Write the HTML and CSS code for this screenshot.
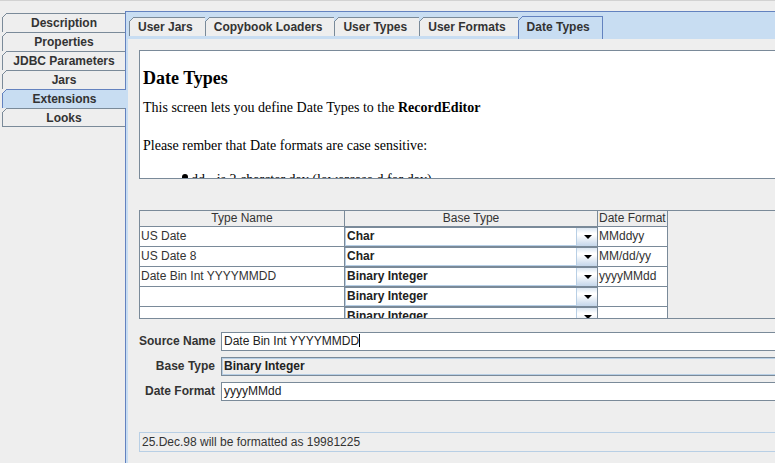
FILE: index.html
```html
<!DOCTYPE html>
<html>
<head>
<meta charset="utf-8">
<title>Date Types</title>
<link rel="stylesheet" href="styles.css">
</head>
<body>
<div class="app">
  <div class="side">
    <div class="vtab">Description</div>
    <div class="vtab">Properties</div>
    <div class="vtab">JDBC Parameters</div>
    <div class="vtab">Jars</div>
    <div class="vtab sel">Extensions</div>
    <div class="vtab last">Looks</div>
  </div>
  <div class="main">
    <div class="tabstrip">
      <div class="htab">User Jars</div>
      <div class="htab">Copybook Loaders</div>
      <div class="htab">User Types</div>
      <div class="htab">User Formats</div>
      <div class="htab sel">Date Types</div>
    </div>
    <div class="content">
      <div class="doc">
        <h2>Date Types</h2>
        <p class="p1">This screen lets you define Date Types to the <b>RecordEditor</b></p>
        <p class="p2">Please rember that Date formats are case sensitive:</p>
        <ul>
          <li>dd - is 2 charcter day (lowercase d for day)</li>
        </ul>
      </div>
      <div class="tpane">
        <div class="grid">
          <div class="th">Type Name</div>
          <div class="th">Base Type</div>
          <div class="th left">Date Format</div>

          <div class="td">US Date</div>
          <div class="td cbcell"><div class="cb"><div class="cb-text">Char</div><div class="cb-btn"><span class="arrow"></span></div></div></div>
          <div class="td">MMddyy</div>

          <div class="td">US Date 8</div>
          <div class="td cbcell"><div class="cb"><div class="cb-text">Char</div><div class="cb-btn"><span class="arrow"></span></div></div></div>
          <div class="td">MM/dd/yy</div>

          <div class="td">Date Bin Int YYYYMMDD</div>
          <div class="td cbcell"><div class="cb"><div class="cb-text">Binary Integer</div><div class="cb-btn"><span class="arrow"></span></div></div></div>
          <div class="td">yyyyMMdd</div>

          <div class="td"></div>
          <div class="td cbcell"><div class="cb"><div class="cb-text">Binary Integer</div><div class="cb-btn"><span class="arrow"></span></div></div></div>
          <div class="td"></div>

          <div class="td"></div>
          <div class="td cbcell"><div class="cb"><div class="cb-text">Binary Integer</div><div class="cb-btn"><span class="arrow"></span></div></div></div>
          <div class="td"></div>
        </div>
      </div>
      <div class="form">
        <div class="lbl">Source Name</div>
        <div class="fld">Date Bin Int YYYYMMDD<span class="caret"></span></div>
        <div class="lbl">Base Type</div>
        <div class="fld combo">Binary Integer</div>
        <div class="lbl">Date Format</div>
        <div class="fld">yyyyMMdd</div>
      </div>
      <div class="msg">25.Dec.98 will be formatted as 19981225</div>
    </div>
  </div>
</div>
</body>
</html>
```

FILE: styles.css
```css
* { box-sizing: border-box; }
html, body { margin: 0; padding: 0; }
body {
  width: 775px;
  height: 463px;
  overflow: hidden;
  background: #eeeeee;
  font-family: "Liberation Sans", Arial, sans-serif;
  font-size: 12px;
  color: #333333;
}
.app {
  display: flex;
  height: 463px;
  border-top: 1px solid #d2d2d2;
}

/* left tabs */
.side {
  width: 125px;
  flex: none;
  padding: 12px 0 0 2px;
  display: flex;
  flex-direction: column;
}
.vtab {
  position: relative;
  height: 19px;
  border-top: 1px solid #7a8a99;
  border-left: 1px solid #7a8a99;
  background: #eeeeee;
  font-weight: bold;
  display: flex;
  align-items: center;
  justify-content: center;
  white-space: nowrap;
}
.vtab::before {
  content: "";
  position: absolute;
  top: -1px;
  left: -1px;
  width: 6px;
  height: 6px;
  background: linear-gradient(135deg, #eeeeee 0 3px, #7a8a99 3px 4.2px, transparent 4.2px);
}
.vtab.last { border-bottom: 1px solid #7a8a99; }
.vtab.sel {
  background: #c8ddf2;
  border-color: #6382bf;
  margin-right: -1px;
  z-index: 1;
}
.vtab.sel::before {
  background: linear-gradient(135deg, #eeeeee 0 3px, #6382bf 3px 4.2px, transparent 4.2px);
}

/* main tabbed pane */
.main {
  flex: none;
  width: 720px;
  margin-top: 10px;
  border-left: 1px solid #6382bf;
  border-top: 1px solid #6382bf;
  background: #c8ddf2;
  padding-left: 2px;
  display: flex;
  flex-direction: column;
}
.tabstrip {
  height: 27px;
  flex: none;
  display: flex;
  align-items: flex-end;
  padding-left: 1px;
}
.htab {
  position: relative;
  height: 19px;
  margin-bottom: 3px;
  margin-right: -1px;
  padding: 0 12px 0 8px;
  border: 1px solid #7a8a99;
  border-bottom: none;
  background: #eeeeee;
  font-weight: bold;
  display: flex;
  align-items: center;
  white-space: nowrap;
}
.htab::before {
  content: "";
  position: absolute;
  top: -1px;
  left: -1px;
  width: 6px;
  height: 6px;
  background: linear-gradient(135deg, #c8ddf2 0 3px, #7a8a99 3px 4.2px, transparent 4.2px);
}
.htab.sel {
  height: 23px;
  margin-bottom: 0;
  padding-bottom: 3px;
  background: #c8ddf2;
  border-color: #6382bf;
  z-index: 1;
}
.htab.sel::before {
  background: linear-gradient(135deg, #c8ddf2 0 3px, #6382bf 3px 4.2px, transparent 4.2px);
}

.content {
  flex: 1;
  background: #eeeeee;
  padding: 11px 0 0 11px;
}

/* html viewer */
.doc {
  height: 129px;
  background: #ffffff;
  border: 1px solid #7a8a99;
  overflow: hidden;
  padding: 0 3px;
  font-family: "Liberation Serif", "Times New Roman", serif;
  color: #000000;
}
.doc h2 {
  margin: 16px 0 0;
  font-size: 18px;
  line-height: 22px;
  font-weight: bold;
}
.doc p {
  margin: 0;
  font-size: 14px;
  line-height: 17px;
}
.doc .p1 { margin-top: 10px; }
.doc .p2 { margin-top: 21px; }
.doc ul {
  list-style: none;
  margin: 17px 0 0;
  padding: 0 0 0 39px;
  font-size: 14px;
  line-height: 17px;
}
.doc li::before {
  content: "";
  display: inline-block;
  width: 6px;
  height: 6px;
  border-radius: 50%;
  background: #000000;
  margin-right: 3px;
  vertical-align: 4px;
}

/* table */
.tpane {
  height: 109px;
  margin-top: 31px;
  border: 1px solid #7a8a99;
  overflow: hidden;
  background: #eeeeee;
}
.grid {
  display: grid;
  grid-template-columns: 205px 253px 70px;
  grid-auto-rows: 20px;
  grid-template-rows: 16px;
  width: 528px;
}
.th {
  height: 16px;
  border-right: 1px solid #7a8a99;
  border-bottom: 1px solid #7a8a99;
  background: #eeeeee;
  text-align: center;
  line-height: 15px;
  white-space: nowrap;
  overflow: hidden;
}
.th.left { text-align: left; padding-left: 1px; }
.td {
  height: 20px;
  border-right: 1px solid #7a8a99;
  border-bottom: 1px solid #7a8a99;
  background: #ffffff;
  padding-left: 1px;
  line-height: 19px;
  white-space: nowrap;
  overflow: hidden;
  color: #333333;
}
.td.cbcell { padding-left: 0; }
.cb {
  display: flex;
  height: 19px;
  border-top: 1px solid #7a8a99;
}
.cb-text {
  flex: 1;
  background: #ffffff;
  border-left: 1px solid #b8cfe5;
  border-bottom: 1px solid #b8cfe5;
  padding-left: 1px;
  font-weight: bold;
  line-height: 17px;
  color: #222222;
}
.cb-btn {
  width: 21px;
  flex: none;
  border-left: 1px solid #b8cfe5;
  background: linear-gradient(#dde8f3 0%, #ffffff 30%, #ffffff 38%, #c4d6ea 100%);
  display: flex;
  align-items: center;
  justify-content: center;
}
.arrow {
  width: 0;
  height: 0;
  border-left: 4px solid transparent;
  border-right: 4px solid transparent;
  border-top: 4px solid #000000;
  margin-left: 1px;
}

/* form */
.form {
  margin-top: 13px;
  display: grid;
  grid-template-columns: 76px 1fr;
  column-gap: 6px;
  row-gap: 6px;
}
.lbl {
  font-weight: bold;
  text-align: right;
  line-height: 19px;
  white-space: nowrap;
}
.fld {
  height: 19px;
  border: 1px solid #7a8a99;
  background: #ffffff;
  padding-left: 2px;
  line-height: 17px;
  color: #222222;
  white-space: nowrap;
}
.fld.combo {
  background: #eeeeee;
  box-shadow: inset 0 0 0 1px #b8cfe5;
  font-weight: bold;
}
.caret {
  display: inline-block;
  width: 1px;
  height: 13px;
  background: #000000;
  vertical-align: -2px;
}
.msg {
  margin-top: 31px;
  height: 20px;
  border: 1px solid #b8cfe5;
  padding-left: 2px;
  line-height: 18px;
  white-space: nowrap;
}
```
